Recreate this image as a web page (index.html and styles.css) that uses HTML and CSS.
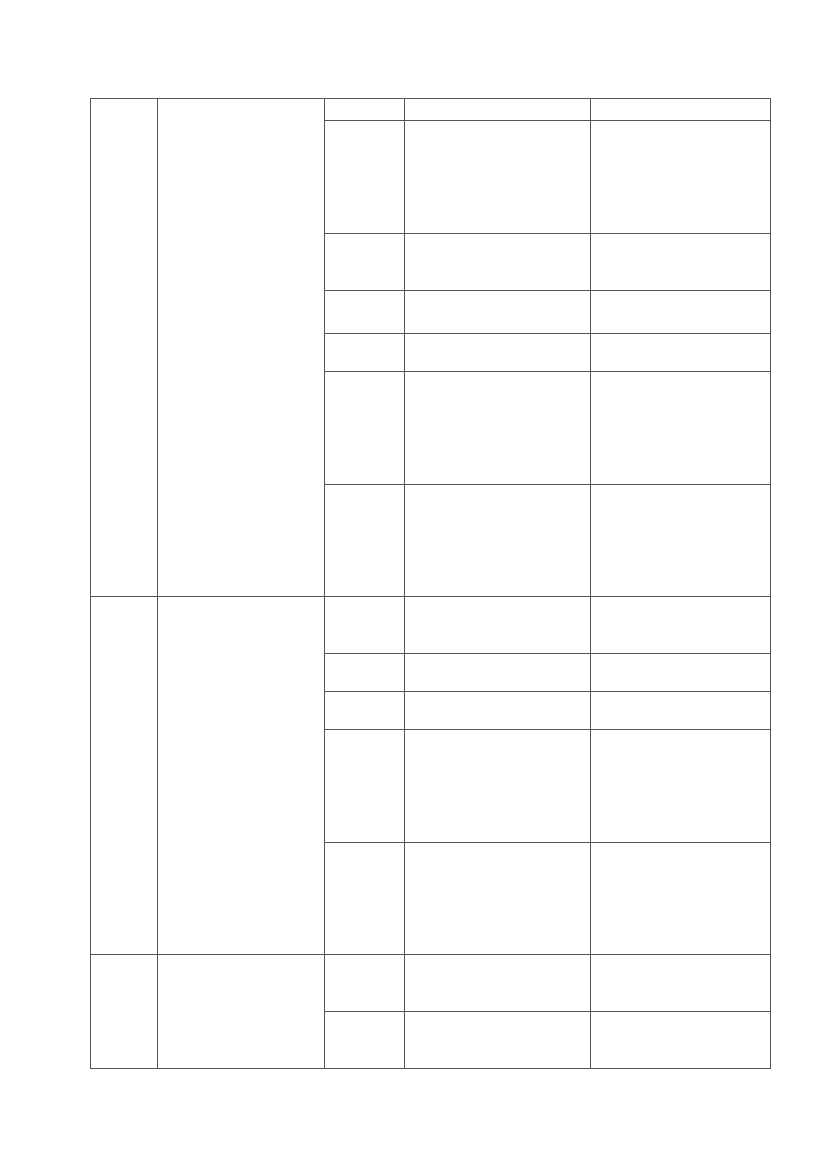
FILE: index.html
```html
<!DOCTYPE html>
<html>
<head>
<meta charset="utf-8">
<link rel="stylesheet" href="styles.css">
</head>
<body>
<div class="page">
  <div class="grid">
    <div class="cell span7"></div>
    <div class="cell span7"></div>
    <div class="cell"></div><div class="cell"></div><div class="cell"></div>
    <div class="cell"></div><div class="cell"></div><div class="cell"></div>
    <div class="cell"></div><div class="cell"></div><div class="cell"></div>
    <div class="cell"></div><div class="cell"></div><div class="cell"></div>
    <div class="cell"></div><div class="cell"></div><div class="cell"></div>
    <div class="cell"></div><div class="cell"></div><div class="cell"></div>
    <div class="cell"></div><div class="cell"></div><div class="cell"></div>

    <div class="cell span5"></div>
    <div class="cell span5"></div>
    <div class="cell"></div><div class="cell"></div><div class="cell"></div>
    <div class="cell"></div><div class="cell"></div><div class="cell"></div>
    <div class="cell"></div><div class="cell"></div><div class="cell"></div>
    <div class="cell"></div><div class="cell"></div><div class="cell"></div>
    <div class="cell"></div><div class="cell"></div><div class="cell"></div>

    <div class="cell span2"></div>
    <div class="cell span2"></div>
    <div class="cell"></div><div class="cell"></div><div class="cell"></div>
    <div class="cell"></div><div class="cell"></div><div class="cell"></div>
  </div>
</div>
</body>
</html>
```
FILE: styles.css
```css
html, body {
  margin: 0;
  padding: 0;
  background: #ffffff;
}
.page {
  padding: 98px 0 0 90px;
  font-family: "Liberation Serif", serif;
}
.grid {
  display: inline-grid;
  grid-template-columns: 66px 166px 79px 185px 179px;
  grid-template-rows: 21px 112px 56px 42px 37px 112px 111px 56px 37px 37px 112px 111px 56px 56px;
  gap: 1px;
  padding: 1px;
  background: #555555;
}
.cell {
  background: #ffffff;
}
.span7 { grid-row: span 7; }
.span5 { grid-row: span 5; }
.span2 { grid-row: span 2; }
```
